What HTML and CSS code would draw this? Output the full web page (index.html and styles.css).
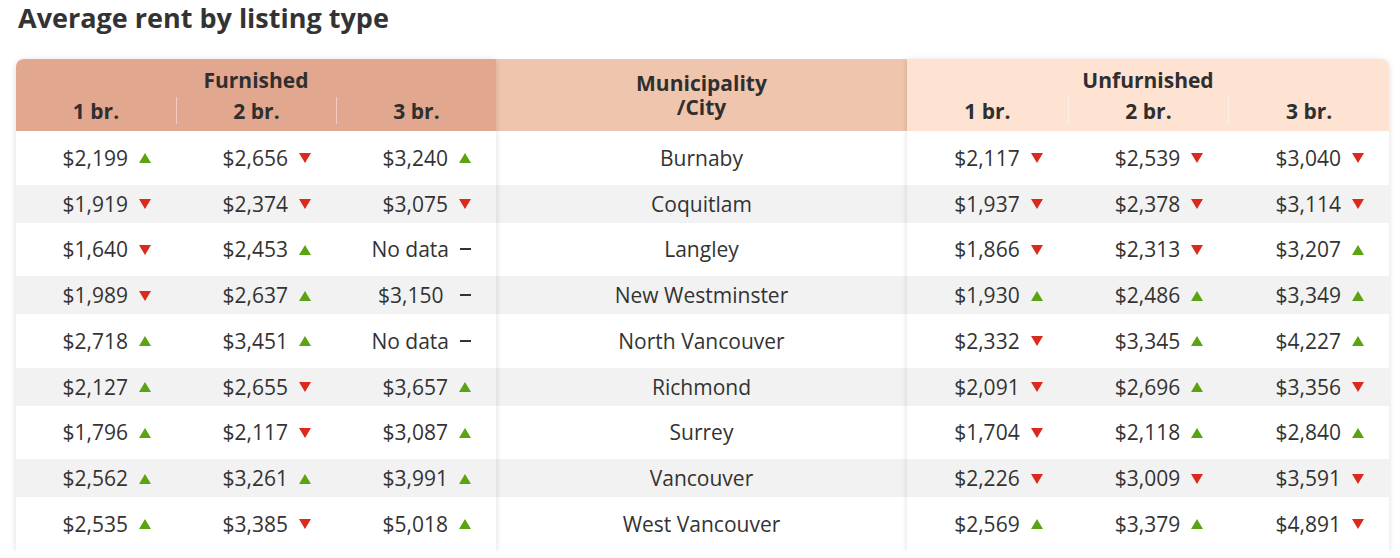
FILE: index.html
```html
<!DOCTYPE html>
<html lang="en">
<head>
<meta charset="utf-8">
<title>Average rent by listing type</title>
<link rel="stylesheet" href="styles.css">
</head>
<body>
<div class="page">
  <h1 class="title">Average rent by listing type</h1>
  <div class="table">
    <section class="panel furnished">
      <div class="head">
        <div class="group">Furnished</div>
        <div class="subs"><div class="sub">1 br.</div><div class="sub">2 br.</div><div class="sub">3 br.</div></div>
      </div>
      <div class="row"><div class="cell">$2,199<i class="up"></i></div><div class="cell">$2,656<i class="down"></i></div><div class="cell">$3,240<i class="up"></i></div></div>
      <div class="row"><div class="cell">$1,919<i class="down"></i></div><div class="cell">$2,374<i class="down"></i></div><div class="cell">$3,075<i class="down"></i></div></div>
      <div class="row"><div class="cell">$1,640<i class="down"></i></div><div class="cell">$2,453<i class="up"></i></div><div class="cell">No data<i class="flat"></i></div></div>
      <div class="row"><div class="cell">$1,989<i class="down"></i></div><div class="cell">$2,637<i class="up"></i></div><div class="cell">$3,150 <i class="flat"></i></div></div>
      <div class="row"><div class="cell">$2,718<i class="up"></i></div><div class="cell">$3,451<i class="up"></i></div><div class="cell">No data<i class="flat"></i></div></div>
      <div class="row"><div class="cell">$2,127<i class="up"></i></div><div class="cell">$2,655<i class="down"></i></div><div class="cell">$3,657<i class="up"></i></div></div>
      <div class="row"><div class="cell">$1,796<i class="up"></i></div><div class="cell">$2,117<i class="down"></i></div><div class="cell">$3,087<i class="up"></i></div></div>
      <div class="row"><div class="cell">$2,562<i class="up"></i></div><div class="cell">$3,261<i class="up"></i></div><div class="cell">$3,991<i class="up"></i></div></div>
      <div class="row"><div class="cell">$2,535<i class="up"></i></div><div class="cell">$3,385<i class="down"></i></div><div class="cell">$5,018<i class="up"></i></div></div>
    </section>
    <section class="panel city">
      <div class="head city-head"><div>Municipality</div><div>/City</div></div>
      <div class="row"><div class="name">Burnaby</div></div>
      <div class="row"><div class="name">Coquitlam</div></div>
      <div class="row"><div class="name">Langley</div></div>
      <div class="row"><div class="name">New Westminster</div></div>
      <div class="row"><div class="name">North Vancouver</div></div>
      <div class="row"><div class="name">Richmond</div></div>
      <div class="row"><div class="name">Surrey</div></div>
      <div class="row"><div class="name">Vancouver</div></div>
      <div class="row"><div class="name">West Vancouver</div></div>
    </section>
    <section class="panel unfurnished">
      <div class="head">
        <div class="group">Unfurnished</div>
        <div class="subs"><div class="sub">1 br.</div><div class="sub">2 br.</div><div class="sub">3 br.</div></div>
      </div>
      <div class="row"><div class="cell">$2,117<i class="down"></i></div><div class="cell">$2,539<i class="down"></i></div><div class="cell">$3,040<i class="down"></i></div></div>
      <div class="row"><div class="cell">$1,937<i class="down"></i></div><div class="cell">$2,378<i class="down"></i></div><div class="cell">$3,114<i class="down"></i></div></div>
      <div class="row"><div class="cell">$1,866<i class="down"></i></div><div class="cell">$2,313<i class="down"></i></div><div class="cell">$3,207<i class="up"></i></div></div>
      <div class="row"><div class="cell">$1,930<i class="up"></i></div><div class="cell">$2,486<i class="up"></i></div><div class="cell">$3,349<i class="up"></i></div></div>
      <div class="row"><div class="cell">$2,332<i class="down"></i></div><div class="cell">$3,345<i class="up"></i></div><div class="cell">$4,227<i class="up"></i></div></div>
      <div class="row"><div class="cell">$2,091<i class="down"></i></div><div class="cell">$2,696<i class="up"></i></div><div class="cell">$3,356<i class="down"></i></div></div>
      <div class="row"><div class="cell">$1,704<i class="down"></i></div><div class="cell">$2,118<i class="up"></i></div><div class="cell">$2,840<i class="up"></i></div></div>
      <div class="row"><div class="cell">$2,226<i class="down"></i></div><div class="cell">$3,009<i class="down"></i></div><div class="cell">$3,591<i class="down"></i></div></div>
      <div class="row"><div class="cell">$2,569<i class="up"></i></div><div class="cell">$3,379<i class="up"></i></div><div class="cell">$4,891<i class="down"></i></div></div>
    </section>
  </div>
</div>
</body>
</html>
```
FILE: styles.css
```css
* { box-sizing: border-box; }
html, body { margin: 0; padding: 0; background: #fff; }
body {
  font-family: "Open Sans", "Noto Sans", sans-serif;
  color: #333;
}
.page { padding: 0 0 0 16px; }
.title {
  margin: 0 0 23px 2px;
  font-size: 27px;
  line-height: 36px;
  font-weight: 700;
  color: #333;
}
.table { display: flex; align-items: flex-start; }
.panel { background: #fff; flex-shrink: 0; }
.furnished {
  width: 480px;
  border-radius: 8px 0 0 0;
  box-shadow: 0 1px 6px rgba(0,0,0,0.14);
  z-index: 1;
  overflow: hidden;
}
.unfurnished {
  width: 482px;
  border-radius: 0 8px 0 0;
  box-shadow: 0 1px 6px rgba(0,0,0,0.14);
  z-index: 1;
  overflow: hidden;
}
.city { width: 411px; }
.head {
  height: 72px;
  padding-top: 8px;
  font-weight: 700;
  font-size: 21px;
  color: #2f2f2f;
  text-align: center;
}
.furnished .head { background: #e2a78f; }
.city .head { background: #f0c5ae; }
.unfurnished .head { background: #fee2d2; }
.group { line-height: 26px; }
.subs { display: grid; grid-template-columns: repeat(3, 1fr); margin-top: 4px; }
.sub { line-height: 26px; padding-top: 1px; }
.sub + .sub { border-left: 1px solid rgba(255,255,255,0.45); }
.city-head {
  padding-top: 0;
  display: flex;
  flex-direction: column;
  justify-content: center;
  line-height: 24px;
}
.row {
  height: 53.5px;
  display: grid;
  grid-template-columns: repeat(3, 1fr);
  align-items: center;
  font-size: 21px;
  color: #333;
}
.row:nth-child(odd) { height: 38px; background: #f2f2f2; }
.city .row { grid-template-columns: 1fr; }
.name { text-align: center; }
.cell {
  display: flex;
  justify-content: flex-end;
  align-items: center;
  padding-right: 25px;
  gap: 11px;
  white-space: pre;
}
.cell i { display: block; width: 12px; height: 10px; margin-top: 1px; }
.up {
  border-left: 6px solid transparent;
  border-right: 6px solid transparent;
  border-bottom: 10px solid #5ba312;
}
.down {
  border-left: 6px solid transparent;
  border-right: 6px solid transparent;
  border-top: 10px solid #da2a1d;
}
.cell i.flat { height: 2px; width: 11px; background: #333; margin-top: 0; }
```
